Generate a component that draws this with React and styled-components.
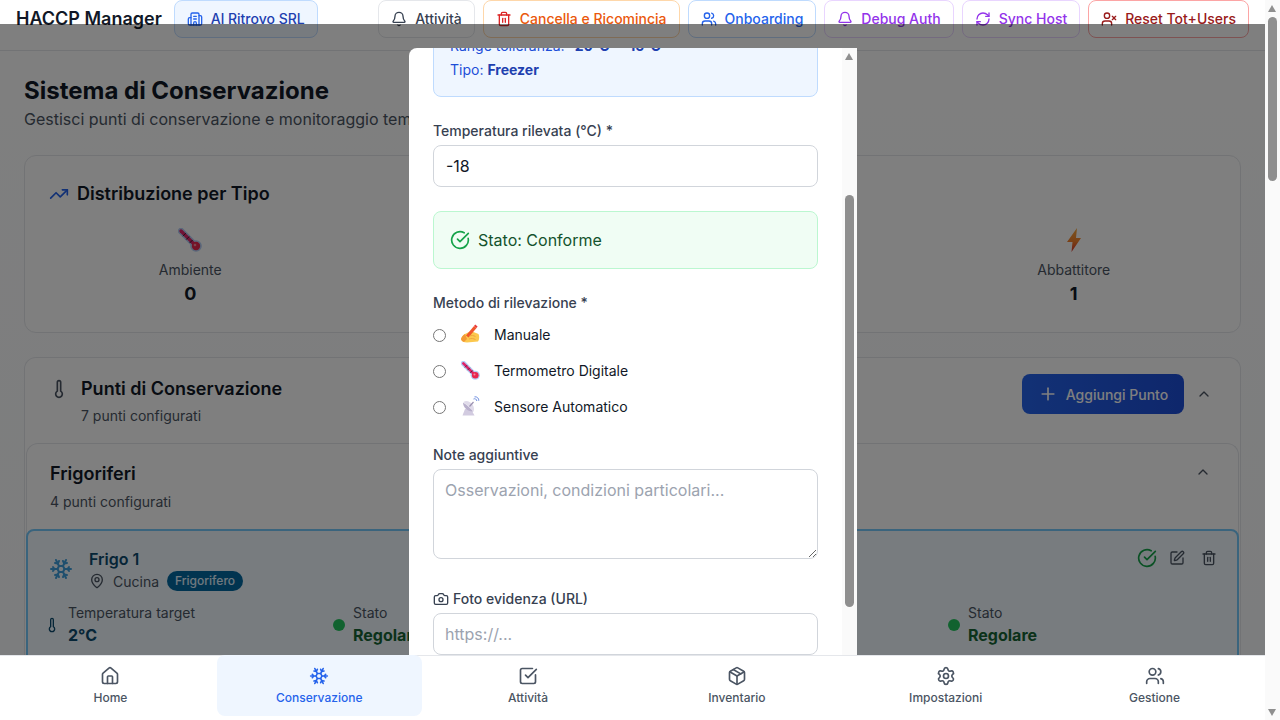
import React from 'react';
import styled, { createGlobalStyle } from 'styled-components';
import {
  Building2, Bell, Trash2, Users, RefreshCw, UserX, TrendingUp, Thermometer, ChevronUp, Plus,
  Snowflake, MapPin, CircleCheckBig, SquarePen, Camera, House, SquareCheckBig, Package, Settings,
} from 'lucide-react';

const GlobalStyle = createGlobalStyle`
  html, body { margin: 0; padding: 0; height: 100%; overflow: hidden; }
  body { font-family: Inter, "Liberation Sans", sans-serif; background: #fff; color: #111827; }
  * { box-sizing: border-box; }
`;

const Page = styled.div`
  width: 1265px;
  height: 720px;
  overflow: hidden;
  background: linear-gradient(180deg, #fff 0%, #f8fafc 100%);
`;

const Header = styled.header`
  height: 51px;
  display: flex;
  align-items: flex-start;
  justify-content: space-between;
  padding: 0 16px;
  background: #fff;
  border-bottom: 1px solid #e5e7eb;
`;

const HeaderLeft = styled.div`
  display: flex;
  align-items: center;
  gap: 12px;
`;

const Brand = styled.h1`
  margin: 0;
  font-size: 18px;
  font-weight: 600;
  line-height: 38px;
`;

const HeaderActions = styled.div`
  display: flex;
  gap: 8px;
`;

const HeaderButton = styled.div`
  height: 38px;
  display: flex;
  align-items: center;
  gap: 8px;
  padding: 0 12px;
  border: 1px solid ${(p) => p.$border};
  border-radius: 8px;
  background: ${(p) => p.$bg || '#fff'};
  color: ${(p) => p.$color};
  font-size: 14px;
  font-weight: 500;
  white-space: nowrap;
  svg { color: ${(p) => p.$icon || p.$color}; }
`;

const HeaderLabel = styled.span`
  margin-top: -1px;
`;

const Main = styled.main`
  padding: 24px 24px 0;
`;

const PageTitle = styled.h2`
  margin: 0;
  font-size: 24px;
  line-height: 32px;
  font-weight: 700;
`;

const PageSubtitle = styled.p`
  margin: 0 0 24px;
  font-size: 16px;
  line-height: 24px;
  color: #4b5563;
`;

const Card = styled.section`
  border: 1px solid #e5e7eb;
  border-radius: 12px;
  background: #fff;
`;

const StatsCard = styled(Card)`
  height: 178px;
  padding: 24px;
  margin-bottom: 24px;
`;

const CardTitle = styled.h3`
  margin: 0;
  display: flex;
  align-items: center;
  gap: 8px;
  font-size: 18px;
  line-height: 28px;
  font-weight: 600;
  svg { color: #2563eb; }
`;

const StatsGrid = styled.div`
  display: grid;
  grid-template-columns: repeat(4, 1fr);
  gap: 16px;
  margin: 16px 3px 0 2px;
`;

const Stat = styled.div`
  display: flex;
  flex-direction: column;
  align-items: center;
`;

const StatIcon = styled.div`
  height: 32px;
  display: flex;
  align-items: center;
  justify-content: center;
`;

const StatLabel = styled.div`
  margin-top: 4px;
  font-size: 14px;
  line-height: 20px;
  color: #4b5563;
`;

const StatValue = styled.div`
  font-size: 18px;
  line-height: 28px;
  font-weight: 700;
`;

const PointsCard = styled(Card)`
  height: 340px;
  padding: 1px;
  border-bottom: 0;
`;

const PointsHeader = styled.div`
  height: 84px;
  display: flex;
  justify-content: space-between;
  align-items: flex-start;
  padding: 15px 27px 0 25px;
`;

const PointsHeading = styled.div`
  display: grid;
  grid-template-columns: 30px auto;
  align-items: center;
  padding-top: 1px;
  svg { color: #4b5563; margin-left: -2px; }
`;

const PointsTitle = styled.div`
  font-size: 18px;
  line-height: 28px;
  font-weight: 600;
`;

const PointsCount = styled.div`
  grid-column: 2;
  margin-top: 3px;
  font-size: 14px;
  line-height: 20px;
  color: #4b5563;
`;

const PointsActions = styled.div`
  display: flex;
  align-items: center;
  gap: 12px;
  svg { color: #4b5563; }
`;

const AddButton = styled.div`
  width: 162px;
  height: 40px;
  display: flex;
  align-items: center;
  justify-content: center;
  gap: 8px;
  border-radius: 8px;
  background: linear-gradient(90deg, #2563eb, #1d4ed8);
  color: #fff;
  font-size: 14px;
  font-weight: 500;
  svg { color: #fff; }
`;

const GroupCard = styled(Card)`
  height: 260px;
  border-bottom: 0;
  border-radius: 12px 12px 0 0;
`;

const GroupHeader = styled.div`
  height: 84px;
  display: flex;
  justify-content: space-between;
  padding: 16px 27px 0 23px;
  svg { color: #4b5563; margin-top: 4px; }
`;

const GroupTitle = styled.div`
  font-size: 18px;
  line-height: 28px;
  font-weight: 600;
`;

const GroupCount = styled.div`
  margin-top: 4px;
  font-size: 14px;
  line-height: 20px;
  color: #4b5563;
`;

const FridgeCard = styled.article`
  height: 170px;
  margin: 1px -1px 0 -1px;
  padding: 16px 20px 0 21px;
  border: 2px solid #74c8fa;
  border-radius: 8px;
  background: #f0f9ff;
`;

const FridgeTop = styled.div`
  display: flex;
  justify-content: space-between;
`;

const FridgeIdentity = styled.div`
  display: flex;
  align-items: center;
  gap: 16px;
  svg.flake { color: #3f9fdc; }
`;

const FridgeName = styled.div`
  font-size: 16px;
  line-height: 24px;
  font-weight: 600;
  color: #0c4a6e;
`;

const FridgeMeta = styled.div`
  display: flex;
  align-items: center;
  gap: 8px;
  height: 20px;
  font-size: 14px;
  color: #4b5563;
`;

const Badge = styled.span`
  padding: 0 8px;
  border-radius: 999px;
  background: #0369a1;
  color: #e0f2fe;
  font-size: 12px;
  line-height: 20px;
  font-weight: 500;
`;

const FridgeTools = styled.div`
  height: 22px;
  display: flex;
  align-items: center;
  gap: 16px;
  color: #4b5563;
  svg:first-child { margin-right: -4px; }
`;

const FridgeGrid = styled.div`
  display: grid;
  grid-template-columns: 287px 307px 308px auto;
  margin: 12px 0 0 -3px;
`;

const Reading = styled.div`
  display: flex;
  align-items: center;
  gap: 8px;
  svg { color: #0c4a6e; margin-left: -2px; }
`;

const Dot = styled.span`
  width: 12px;
  height: 12px;
  border-radius: 50%;
  background: #22c55e;
`;

const ReadingLabel = styled.div`
  font-size: 14px;
  line-height: 20px;
  color: #4b5563;
`;

const ReadingValue = styled.div`
  font-size: 16px;
  line-height: 24px;
  font-weight: 700;
  color: ${(p) => p.$color};
`;

const Overlay = styled.div`
  position: absolute;
  left: 0;
  top: 24px;
  width: 1265px;
  height: 631px;
  background: rgba(0, 0, 0, 0.5);
`;

const Modal = styled.div`
  position: absolute;
  left: 409px;
  top: 48px;
  width: 448px;
  height: 607px;
  overflow: hidden;
  padding: 0 39px 0 24px;
  border-radius: 8px 0 0 0;
  background: #fff;
`;

const InfoBox = styled.div`
  height: 76px;
  margin: -27px 0 24px;
  padding: 14px 16px 0;
  border: 1px solid #bfdbfe;
  border-radius: 8px;
  background: #eff6ff;
  color: #1d4ed8;
  font-size: 14px;
  line-height: 20px;
  p { margin: 0 0 4px; }
  b { color: #1e40af; font-weight: 700; }
`;

const Field = styled.div`
  margin-bottom: ${(p) => p.$gap || 24}px;
`;

const Label = styled.label`
  display: flex;
  align-items: center;
  gap: 4px;
  margin-bottom: 4px;
  font-size: 14px;
  line-height: 20px;
  font-weight: 500;
  color: #374151;
`;

const TextInput = styled.input`
  display: block;
  width: 100%;
  height: 42px;
  padding: 0 ${(p) => p.$inset || 12}px;
  border: 1px solid #d1d5db;
  border-radius: 8px;
  background: #fff;
  font: 16px Inter, sans-serif;
  color: #111827;
  &::placeholder { color: #9ca3af; opacity: 1; }
`;

const TextArea = styled.textarea`
  display: block;
  width: 100%;
  height: 90px;
  padding: 8px 11px;
  border: 1px solid #d1d5db;
  border-radius: 8px;
  background: #fff;
  font: 16px/24px Inter, sans-serif;
  &::placeholder { color: #9ca3af; opacity: 1; }
`;

const StatusBox = styled.div`
  height: 58px;
  display: flex;
  align-items: center;
  gap: 8px;
  margin-bottom: 24px;
  padding: 0 16px;
  border: 1px solid #bbf7d0;
  border-radius: 8px;
  background: #f0fdf4;
  color: #14532d;
  font-size: 16px;
  font-weight: 400;
  svg { color: #16a34a; }
`;

const MethodList = styled.div`
  display: flex;
  flex-direction: column;
  gap: 12px;
  margin-top: 9px;
`;

const MethodRow = styled.label`
  height: 24px;
  display: grid;
  grid-template-columns: 13px 24px auto;
  align-items: center;
  column-gap: 12px;
  font-size: 14px;
  color: #111827;
  input { margin: 2px 0 0; }
`;

const MethodIcon = styled.span`
  display: flex;
  align-items: center;
  justify-content: center;
`;

const ModalScrollbar = styled.div`
  position: absolute;
  right: 0;
  top: 0;
  bottom: 0;
  width: 15px;
  background: #fafafa;
`;

const PageScrollbar = styled.div`
  position: absolute;
  right: 0;
  top: 0;
  bottom: 0;
  width: 15px;
  background: #fafafa;
`;

const Thumb = styled.div`
  position: absolute;
  left: 3px;
  width: 9px;
  top: ${(p) => p.$top}px;
  height: ${(p) => p.$height}px;
  border-radius: 5px;
  background: #8f8f8f;
`;

const Arrow = styled.div`
  position: absolute;
  left: 3px;
  width: 0;
  height: 0;
  border-left: 4.5px solid transparent;
  border-right: 4.5px solid transparent;
  ${(p) => (p.$down
    ? 'bottom: 4px; border-top: 7px solid #8f8f8f;'
    : 'top: 5px; border-bottom: 7px solid #8f8f8f;')}
`;

const BottomNav = styled.nav`
  position: absolute;
  left: 0;
  bottom: 0;
  width: 1265px;
  height: 65px;
  display: grid;
  grid-template-columns: repeat(6, 1fr);
  gap: 4px;
  padding: 0 8px 4px;
  background: #fff;
  border-top: 1px solid #e5e7eb;
`;

const NavItem = styled.div`
  display: flex;
  flex-direction: column;
  align-items: center;
  justify-content: center;
  gap: 4px;
  margin-top: -1px;
  border-radius: 8px;
  font-size: 12px;
  line-height: 16px;
  font-weight: 500;
  color: ${(p) => (p.$active ? '#2563eb' : '#4b5563')};
  background: ${(p) => (p.$active ? '#eff6ff' : 'transparent')};
`;

// the reference shows colour emoji from another platform, so these are drawn
const ThermometerGlyph = ({ size = 24 }) => (
  <svg width={size} height={size} viewBox="0 0 24 24" fill="none">
    <path d="M3 3 L17 17" stroke="#b4cff5" strokeWidth="6.4" strokeLinecap="round" />
    <circle cx="18" cy="18" r="5.8" fill="#b4cff5" />
    <path d="M3 3 L17 17" stroke="#e0246a" strokeWidth="3.4" strokeLinecap="round" />
    <circle cx="18" cy="18" r="4.2" fill="#e8264f" />
    <circle cx="17" cy="17" r="1.3" fill="#f58aa0" />
    <path d="M4.8 8.2 L7.8 5.2 M8.2 11.6 L11.2 8.6 M11.6 15 L14.6 12" stroke="#3a2a3a" strokeWidth="1" />
  </svg>
);

const BoltGlyph = () => (
  <svg width="24" height="24" viewBox="0 0 24 24">
    <defs>
      <linearGradient id="boltFill" x1="0" y1="0" x2="0" y2="1">
        <stop offset="0" stopColor="#f6a83c" />
        <stop offset="0.55" stopColor="#f5822c" />
        <stop offset="1" stopColor="#d9322a" />
      </linearGradient>
    </defs>
    <path d="M15 0 L5 14 H10.5 L9.5 24 L19 10 H14 Z" fill="url(#boltFill)" />
  </svg>
);

const HandGlyph = () => (
  <svg width="20" height="20" viewBox="0 0 20 20">
    <path d="M1 15 C2 12 4 10 7 9 L11 7 L18.5 10 C19.6 12 19.4 16 18 17.5 L7 18.5 C4 18.5 1.5 17.5 1 15 Z" fill="#fcc84e" />
    <path d="M1 15 C2 12 3.5 10.8 5 10 L7 15 L4 18 C2.5 17.5 1.3 16.5 1 15 Z" fill="#f29a36" />
    <path d="M6 11.5 L14 2 L16.5 4 L8.5 13.5 Z" fill="#f0562c" />
    <path d="M14 2 L15.2 0.6 L17.6 2.6 L16.5 4 Z" fill="#e83a3a" />
    <path d="M9.5 12 C11.5 11 13.5 11.5 15.5 12.5 M9 15 C11 14 13.5 14.5 15.5 15.5" stroke="#f0a63e" strokeWidth="1" fill="none" />
  </svg>
);

const SatelliteGlyph = () => (
  <svg width="20" height="20" viewBox="0 0 20 20" fill="none">
    <path d="M2.5 19.5 L5 13 H11 L14.5 19.5 Z" fill="#d2cbe0" />
    <path d="M3 6.5 C3 11.5 8 16 13.5 15.5 C11 12.5 7 9 3 6.5 Z" fill="#b9b0cc" />
    <path d="M3.5 6 L13.5 15.5 C15 12 13 8 10 6.2 C7.5 4.8 5 4.8 3.5 6 Z" fill="#e0dbea" />
    <path d="M9.5 10.5 L13.5 6" stroke="#9a90b0" strokeWidth="1.2" />
    <path d="M13.5 3 C15 2.2 16.8 3.2 16.8 5 M14.5 0.8 C17 0.4 19 2.4 18.8 4.8" stroke="#6f8fe0" strokeWidth="1" />
  </svg>
);

const headerButtons = [
  { icon: Bell, label: 'Attività', border: '#e5e7eb', color: '#374151' },
  { icon: Trash2, label: 'Cancella e Ricomincia', border: '#fed7aa', color: '#ea580c', icon2: '#dc2626' },
  { icon: Users, label: 'Onboarding', border: '#bfdbfe', color: '#2563eb' },
  { icon: Bell, label: 'Debug Auth', border: '#e9d5ff', color: '#9333ea' },
  { icon: RefreshCw, label: 'Sync Host', border: '#e9d5ff', color: '#9333ea' },
  { icon: UserX, label: 'Reset Tot+Users', border: '#fca5a5', color: '#991b1b' },
];

const stats = [
  { glyph: <ThermometerGlyph />, label: 'Ambiente', value: 0 },
  { glyph: <Snowflake size={24} color="#0284c7" />, label: 'Frigorifero', value: 4 },
  { glyph: <Snowflake size={24} color="#2563eb" />, label: 'Freezer', value: 2 },
  { glyph: <BoltGlyph />, label: 'Abbattitore', value: 1 },
];

const methods = [
  { glyph: <HandGlyph />, label: 'Manuale' },
  { glyph: <ThermometerGlyph size={19} />, label: 'Termometro Digitale' },
  { glyph: <SatelliteGlyph />, label: 'Sensore Automatico' },
];

const navItems = [
  { icon: House, label: 'Home' },
  { icon: Snowflake, label: 'Conservazione', active: true },
  { icon: SquareCheckBig, label: 'Attività' },
  { icon: Package, label: 'Inventario' },
  { icon: Settings, label: 'Impostazioni' },
  { icon: Users, label: 'Gestione' },
];

export default function App() {
  return (
    <>
      <GlobalStyle />
      <Page>
        <Header>
          <HeaderLeft>
            <Brand>HACCP Manager</Brand>
            <HeaderButton $border="#bfdbfe" $bg="#eff6ff" $color="#1e40af" $icon="#2563eb">
              <Building2 size={16} />
              <HeaderLabel>Al Ritrovo SRL</HeaderLabel>
            </HeaderButton>
          </HeaderLeft>
          <HeaderActions>
            {headerButtons.map(({ icon: Icon, label, border, color, icon2 }) => (
              <HeaderButton key={label} $border={border} $color={color} $icon={icon2}>
                <Icon size={16} />
                <HeaderLabel>{label}</HeaderLabel>
              </HeaderButton>
            ))}
          </HeaderActions>
        </Header>

        <Main>
          <PageTitle>Sistema di Conservazione</PageTitle>
          <PageSubtitle>Gestisci punti di conservazione e monitoraggio temperature</PageSubtitle>

          <StatsCard>
            <CardTitle>
              <TrendingUp size={20} />
              Distribuzione per Tipo
            </CardTitle>
            <StatsGrid>
              {stats.map((s) => (
                <Stat key={s.label}>
                  <StatIcon>{s.glyph}</StatIcon>
                  <StatLabel>{s.label}</StatLabel>
                  <StatValue>{s.value}</StatValue>
                </Stat>
              ))}
            </StatsGrid>
          </StatsCard>

          <PointsCard>
            <PointsHeader>
              <PointsHeading>
                <Thermometer size={20} />
                <PointsTitle>Punti di Conservazione</PointsTitle>
                <PointsCount>7 punti configurati</PointsCount>
              </PointsHeading>
              <PointsActions>
                <AddButton>
                  <Plus size={20} />
                  Aggiungi Punto
                </AddButton>
                <ChevronUp size={16} />
              </PointsActions>
            </PointsHeader>

            <GroupCard>
              <GroupHeader>
                <div>
                  <GroupTitle>Frigoriferi</GroupTitle>
                  <GroupCount>4 punti configurati</GroupCount>
                </div>
                <ChevronUp size={16} />
              </GroupHeader>
              <FridgeCard>
                <FridgeTop>
                  <FridgeIdentity>
                    <Snowflake className="flake" size={24} />
                    <div>
                      <FridgeName>Frigo 1</FridgeName>
                      <FridgeMeta>
                        <MapPin size={16} />
                        Cucina
                        <Badge>Frigorifero</Badge>
                      </FridgeMeta>
                    </div>
                  </FridgeIdentity>
                  <FridgeTools>
                    <CircleCheckBig size={20} color="#16a34a" />
                    <SquarePen size={16} />
                    <Trash2 size={16} />
                  </FridgeTools>
                </FridgeTop>
                <FridgeGrid>
                  <Reading>
                    <Thermometer size={16} />
                    <div>
                      <ReadingLabel>Temperatura target</ReadingLabel>
                      <ReadingValue $color="#0c4a6e">2°C</ReadingValue>
                    </div>
                  </Reading>
                  <Reading>
                    <Dot />
                    <div>
                      <ReadingLabel>Stato</ReadingLabel>
                      <ReadingValue $color="#166534">Regolare</ReadingValue>
                    </div>
                  </Reading>
                  <Reading />
                  <Reading>
                    <Dot />
                    <div>
                      <ReadingLabel>Stato</ReadingLabel>
                      <ReadingValue $color="#166534">Regolare</ReadingValue>
                    </div>
                  </Reading>
                </FridgeGrid>
              </FridgeCard>
            </GroupCard>
          </PointsCard>
        </Main>
      </Page>

      <Overlay />

      <Modal>
        <InfoBox>
          <p>Range tolleranza: <b>-20°C - -15°C</b></p>
          <p>Tipo: <b>Freezer</b></p>
        </InfoBox>

        <Field>
          <Label>Temperatura rilevata (°C) *</Label>
          <TextInput defaultValue="-18" />
        </Field>

        <StatusBox>
          <CircleCheckBig size={20} />
          Stato: Conforme
        </StatusBox>

        <Field $gap={27}>
          <Label>Metodo di rilevazione *</Label>
          <MethodList>
            {methods.map((m) => (
              <MethodRow key={m.label}>
                <input type="radio" name="method" />
                <MethodIcon>{m.glyph}</MethodIcon>
                {m.label}
              </MethodRow>
            ))}
          </MethodList>
        </Field>

        <Field $gap={30}>
          <Label>Note aggiuntive</Label>
          <TextArea placeholder="Osservazioni, condizioni particolari..." />
        </Field>

        <Field>
          <Label>
            <Camera size={16} />
            Foto evidenza (URL)
          </Label>
          <TextInput $inset={11} placeholder="https://..." />
        </Field>

        <ModalScrollbar>
          <Arrow />
          <Thumb $top={147} $height={412} />
        </ModalScrollbar>
      </Modal>

      <BottomNav>
        {navItems.map(({ icon: Icon, label, active }) => (
          <NavItem key={label} $active={active}>
            <Icon size={20} />
            {label}
          </NavItem>
        ))}
      </BottomNav>

      <PageScrollbar>
        <Arrow />
        <Thumb $top={17} $height={164} />
        <Arrow $down />
      </PageScrollbar>
    </>
  );
}
